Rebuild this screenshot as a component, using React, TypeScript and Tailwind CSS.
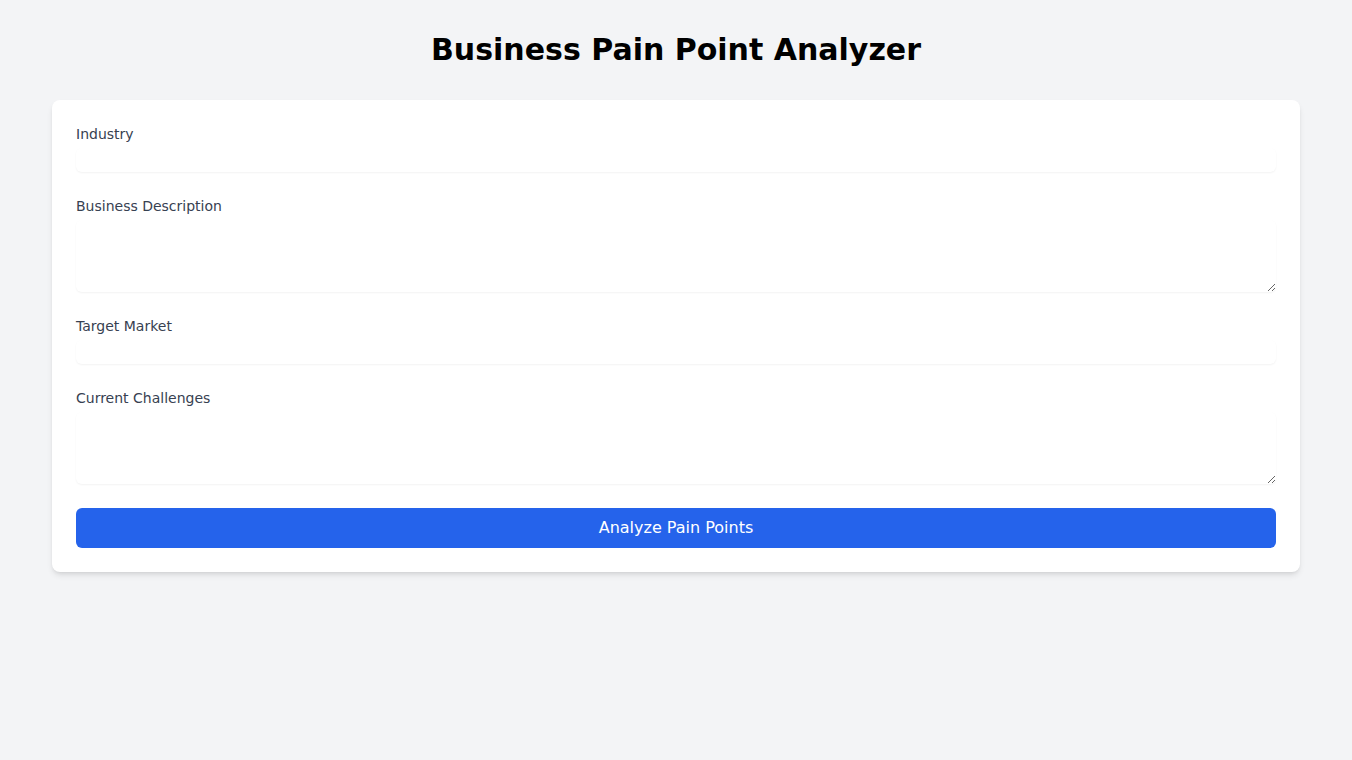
export default function App() {
  const fields = [
    { label: "Industry", multi: false },
    { label: "Business Description", multi: true },
    { label: "Target Market", multi: false },
    { label: "Current Challenges", multi: true },
  ];

  return (
    <div className="min-h-screen bg-[#f3f4f6] font-['DejaVu_Sans',sans-serif]">
      <div className="container mx-auto px-4 py-8">
        <h1 className="text-3xl font-bold text-center mb-8 text-black">
          Business Pain Point Analyzer
        </h1>
        <form
          className="bg-white rounded-lg shadow-[0_4px_6px_-1px_rgb(0_0_0/0.1),0_2px_4px_-2px_rgb(0_0_0/0.1)] p-6 space-y-6"
          onSubmit={(e) => e.preventDefault()}
        >
          {fields.map((f) => (
            <div key={f.label}>
              <label className="block text-sm font-medium text-[#374151]">
                {f.label}
              </label>
              {f.multi ? (
                <textarea
                  rows={3}
                  className="mt-1 block w-full rounded-md shadow-[0_1px_2px_0_rgb(0_0_0/0.05)] bg-white"
                />
              ) : (
                <input
                  type="text"
                  className="mt-1 block w-full rounded-md shadow-[0_1px_2px_0_rgb(0_0_0/0.05)] bg-white"
                />
              )}
            </div>
          ))}
          <button
            type="submit"
            className="w-full bg-[#2563eb] text-white py-2 rounded-md"
          >
            Analyze Pain Points
          </button>
        </form>
      </div>
    </div>
  );
}
